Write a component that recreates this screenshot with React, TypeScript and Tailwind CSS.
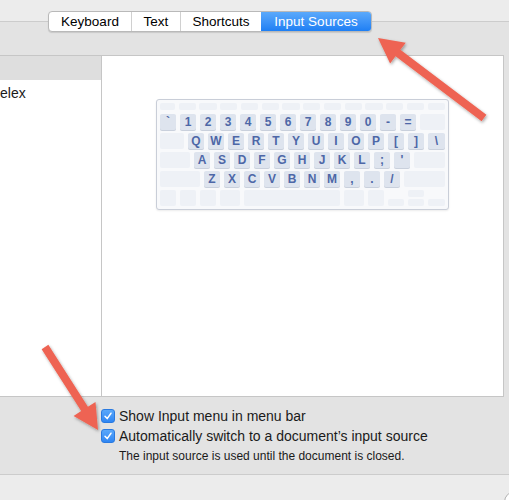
import React from 'react';

const font = { fontFamily: '"Liberation Sans", Arial, sans-serif' };

const tabs = [
    { label: 'Keyboard', w: 'w-[82px]' },
    { label: 'Text', w: 'w-[49px]' },
    { label: 'Shortcuts', w: 'w-[81px]' },
    { label: 'Input Sources', w: 'w-[110px]', active: true },
];

function Key({ label, className = 'w-[16px]' }: { label?: string; className?: string }) {
    if (!label) {
        return <div className={`${className} h-full rounded-[2px] bg-[#eef1f6]`} />;
    }
    return (
        <div
            className={`${className} h-full rounded-[2px] bg-[#dee4ee] shadow-[0_1px_0_#c9d0dc] flex items-center justify-center text-[12px] font-bold leading-none text-[#4d67a7]`}
        >
            {label}
        </div>
    );
}

function KeyRow({ children }: { children: React.ReactNode }) {
    return <div className="flex gap-[4px] h-[16px]">{children}</div>;
}

function Keyboard() {
    const r2 = ['`', '1', '2', '3', '4', '5', '6', '7', '8', '9', '0', '-', '='];
    const r3 = ['Q', 'W', 'E', 'R', 'T', 'Y', 'U', 'I', 'O', 'P', '[', ']'];
    const r4 = ['A', 'S', 'D', 'F', 'G', 'H', 'J', 'K', 'L', ';', "'"];
    const r5 = ['Z', 'X', 'C', 'V', 'B', 'N', 'M', ',', '.', '/'];
    return (
        <div className="w-[293px] rounded-[3px] border border-[#c9ced8] bg-[#f8f9fb] p-[3px] shadow-[0_1px_2px_rgba(0,0,0,0.08)] flex flex-col gap-[3px]" style={font}>
            {/* function row */}
            <div className="flex gap-[3.5px] h-[7px] mb-[1px]">
                <div className="w-[15px] rounded-[2px] bg-[#eef1f6]" />
                {Array.from({ length: 13 }).map((_, i) => (
                    <div key={i} className="flex-1 rounded-[2px] bg-[#eef1f6]" />
                ))}
            </div>
            <KeyRow>
                {r2.map((k) => <Key key={k} label={k} />)}
                <Key className="w-[25px]" />
            </KeyRow>
            <KeyRow>
                <Key className="w-[24px]" />
                {r3.map((k) => <Key key={k} label={k} />)}
                <Key label="\" className="w-[17px]" />
            </KeyRow>
            <KeyRow>
                <Key className="w-[30px]" />
                {r4.map((k) => <Key key={k} label={k} />)}
                <Key className="w-[31px]" />
            </KeyRow>
            <KeyRow>
                <Key className="w-[40px]" />
                {r5.map((k) => <Key key={k} label={k} />)}
                <Key className="w-[41px]" />
            </KeyRow>
            <KeyRow>
                <Key />
                <Key />
                <Key />
                <Key className="w-[20px]" />
                <Key className="w-[96px]" />
                <Key className="w-[20px]" />
                <Key />
                <div className="flex gap-[4px] items-end h-full">
                    <div className="w-[16px] h-[7px] rounded-[2px] bg-[#eef1f6]" />
                    <div className="w-[16px] h-full flex flex-col justify-between">
                        <div className="h-[7px] rounded-[2px] bg-[#eef1f6]" />
                        <div className="h-[7px] rounded-[2px] bg-[#eef1f6]" />
                    </div>
                    <div className="w-[17px] h-[7px] rounded-[2px] bg-[#eef1f6]" />
                </div>
            </KeyRow>
        </div>
    );
}

function Checkbox() {
    return (
        <div className="w-[14px] h-[14px] shrink-0 rounded-[3px] bg-gradient-to-b from-[#5aa8fa] to-[#2f86f3] border border-[#2a7ae0] flex items-center justify-center">
            <svg width="10" height="10" viewBox="0 0 10 10">
                <path d="M2 5.2 L4.2 7.6 L8 2.2" fill="none" stroke="white" strokeWidth="1.5" strokeLinecap="round" strokeLinejoin="round" />
            </svg>
        </div>
    );
}

function arrowPoints(tx: number, ty: number, hx: number, hy: number) {
    const dx = hx - tx;
    const dy = hy - ty;
    const len = Math.hypot(dx, dy);
    const ux = dx / len;
    const uy = dy / len;
    const px = -uy;
    const py = ux;
    const headLen = 25;
    const headW = 13;
    const shaftW = 4;
    const bx = hx - ux * headLen;
    const by = hy - uy * headLen;
    const pts = [
        [tx + px * shaftW, ty + py * shaftW],
        [bx + px * shaftW, by + py * shaftW],
        [bx + px * headW, by + py * headW],
        [hx, hy],
        [bx - px * headW, by - py * headW],
        [bx - px * shaftW, by - py * shaftW],
        [tx - px * shaftW, ty - py * shaftW],
    ];
    return pts.map((p) => p.join(',')).join(' ');
}

export default function App() {
    return (
        <div className="relative w-[509px] h-[500px] overflow-hidden bg-[#ececec] text-[#1a1a1a]" style={font}>
            {/* tabs */}
            <div className="relative z-10 pt-[11px] pl-[48px]">
                <div className="flex h-[21px] w-fit rounded-[4px] border border-[#b9b9b9] bg-white shadow-[0_1px_1px_rgba(0,0,0,0.12)] overflow-hidden text-[13.5px]">
                    {tabs.map((t, i) => (
                        <div
                            key={t.label}
                            className={`${t.w} pt-[1px] flex items-center justify-center ${i > 0 && !t.active ? 'border-l border-[#d0d0d0]' : ''} ${t.active ? 'bg-gradient-to-b from-[#5aa9fb] to-[#1d7ff4] text-white' : 'text-black'}`}
                        >
                            {t.label}
                        </div>
                    ))}
                </div>
            </div>

            {/* box */}
            <div className="-mt-[11px] h-[454px] border-y border-[#cccccc] bg-[#e3e3e3] pt-[33px]">
                <div className="flex w-[504px] h-[342px] border-y border-r border-[#c6c6c6] bg-white">
                    <div className="w-[102px] border-r border-[#c6c6c6] flex flex-col">
                        <div className="h-[24px] bg-[#dedede]" />
                        <div className="text-[14px] pt-[5px] leading-[16px]">elex</div>
                    </div>
                    <div className="flex-1 flex justify-center pt-[43px]">
                        <div>
                            <Keyboard />
                        </div>
                    </div>
                </div>

                <div className="pl-[101px] pt-[12px] flex flex-col">
                    <div className="flex items-center gap-[4px] h-[14px]">
                        <Checkbox />
                        <span className="text-[14px] leading-none whitespace-nowrap">Show Input menu in menu bar</span>
                    </div>
                    <div className="flex items-center gap-[4px] h-[14px] mt-[6px]">
                        <Checkbox />
                        <span className="text-[14px] leading-none whitespace-nowrap">Automatically switch to a document’s input source</span>
                    </div>
                    <div className="pl-[18px] mt-[7px] text-[12px] leading-[13px] whitespace-nowrap">
                        The input source is used until the document is closed.
                    </div>
                </div>
            </div>

            {/* bottom strip */}
            <div className="flex justify-end">
                <div className="w-[22px] h-[22px] mt-[16px] -mr-[17px] shrink-0 rounded-full border border-[#b0b0b0] bg-white" />
            </div>

            {/* annotation arrows */}
            <svg className="absolute inset-0 pointer-events-none" width="509" height="500" viewBox="0 0 509 500">
                <defs>
                    <filter id="sh" x="-20%" y="-20%" width="140%" height="140%">
                        <feDropShadow dx="1" dy="1.5" stdDeviation="1.5" floodColor="#000" floodOpacity="0.35" />
                    </filter>
                </defs>
                <polygon points={arrowPoints(484, 118, 378, 38)} fill="#ee6452" filter="url(#sh)" />
                <polygon points={arrowPoints(45, 347, 98, 430)} fill="#ee6452" filter="url(#sh)" />
            </svg>
        </div>
    );
}
